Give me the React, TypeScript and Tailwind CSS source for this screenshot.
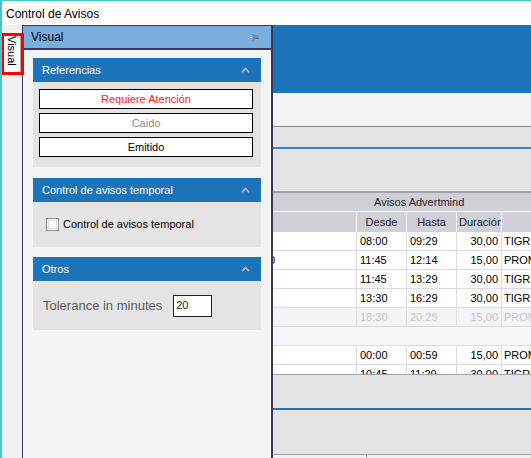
import React from "react";

function Chevron() {
  return (
    <svg width="9" height="6" viewBox="0 0 9 6" className="block">
      <path d="M1 5.2 L4.5 1.6 L8 5.2" fill="none" stroke="#a7b2c3" strokeWidth="1.8" />
    </svg>
  );
}

function Pin() {
  return (
    <svg width="9" height="7" viewBox="0 0 9 7" className="block">
      <rect x="0" y="3" width="2.5" height="1" fill="#ffffff" />
      <rect x="2.5" y="0" width="1" height="7" fill="#7d8591" />
      <rect x="3.5" y="1" width="5" height="4" fill="#838b97" />
      <rect x="3.5" y="4" width="5" height="1" fill="#5f6772" />
    </svg>
  );
}

function GroupHeader({ title }: { title: string }) {
  return (
    <div className="h-[24px] bg-[#1e74b8] flex items-center justify-between pl-[9px] pr-[11px] text-white text-[11px]">
      <span>{title}</span>
      <Chevron />
    </div>
  );
}

type Row = { c0?: string; a: string; b: string; d: string; e: string; faded?: boolean; blank?: boolean };

const rows: Row[] = [
  { a: "08:00", b: "09:29", d: "30,00", e: "TIGRE" },
  { c0: "0", a: "11:45", b: "12:14", d: "15,00", e: "PROMO" },
  { a: "11:45", b: "13:29", d: "30,00", e: "TIGRE" },
  { a: "13:30", b: "16:29", d: "30,00", e: "TIGRE" },
  { a: "18:30", b: "20:29", d: "15,00", e: "PROMO", faded: true },
  { a: "", b: "", d: "", e: "", blank: true },
  { a: "00:00", b: "00:59", d: "15,00", e: "PROMO" },
  { a: "10:45", b: "11:29", d: "30,00", e: "TIGRE" },
];

export default function App() {
  return (
    <div className="w-[531px] h-[458px] overflow-hidden bg-white border-t border-l-2 border-[#3fc8cc] font-['Liberation_Sans',Arial,sans-serif] text-black">
      {/* Title bar */}
      <div className="h-[24px] flex items-center pl-[4px] pt-[2px] text-[12px]">Control de Avisos</div>

      {/* Client area */}
      <div className="relative flex h-[433px]">
        {/* Left auto-hide strip */}
        <div className="w-[20px] bg-[#f0f0f0] flex flex-col">
          <div className="mt-[8px] h-[42px] w-[19px] bg-[#f7f7f7] border-r border-[#a9a9a9] flex justify-center pt-[3px]">
            <span className="[writing-mode:vertical-rl] text-[11px] leading-[13px]">Visual</span>
          </div>
        </div>

        {/* Flyout panel */}
        <div className="w-[251px] border-t border-l border-r-2 border-[#3a3a58] bg-[#f4f4f4] flex flex-col">
          <div className="h-[22px] bg-[#79aedd] flex items-center justify-between pl-[8px] pr-[12px] text-[12px]">
            <span>Visual</span>
            <Pin />
          </div>
          <div className="h-[2px] bg-[#3a3a58]" />

          <div className="mx-[10px] mt-[8px]">
            <GroupHeader title="Referencias" />
            <div className="h-[85px] bg-[#e4e4e4] pl-[6px] pr-[8px] pt-[7px] flex flex-col gap-[4px] text-[11px]">
              <div className="h-[20px] bg-white border border-black flex items-center justify-center text-[#ff1a1a]">Requiere Atención</div>
              <div className="h-[20px] bg-white border border-black flex items-center justify-center text-[#8c8c8c]">Caido</div>
              <div className="h-[20px] bg-white border border-black flex items-center justify-center text-black">Emitido</div>
            </div>
          </div>

          <div className="mx-[10px] mt-[11px]">
            <GroupHeader title="Control de avisos temporal" />
            <div className="h-[45px] bg-[#e4e4e4] pl-[13px] flex items-center gap-[4px] text-[11px]">
              <div className="w-[13px] h-[13px] border border-[#8f9097] bg-white p-[1px]">
                <div className="w-full h-full border border-[#dcdcdc]" />
              </div>
              <span>Control de avisos temporal</span>
            </div>
          </div>

          <div className="mx-[10px] mt-[10px]">
            <GroupHeader title="Otros" />
            <div className="h-[49px] bg-[#e4e4e4] pl-[10px] flex items-center gap-[11px]">
              <span className="text-[13px] text-[#5a5a5a]">Tolerance in minutes</span>
              <div className="w-[39px] h-[22px] bg-white border border-[#222] flex items-center pl-[2px] text-[11px] text-[#222]">20</div>
            </div>
          </div>
        </div>

        {/* Main area (behind) */}
        <div className="flex-1 flex flex-col overflow-hidden">
          <div className="h-[68px] bg-[#1d74b8]" />
          <div className="h-[33px] bg-[#f4f4f4] border-t border-[#e4f1fb]" />
          <div className="h-[22px] bg-[#e4e4e4] border-t border-[#7b8a8b]" />
          <div className="h-[44px] bg-[#e4e4e4] border-t-2 border-[#3a86c6]" />
          <div className="h-[20px] bg-[#cfcfd6] border-t-2 border-[#a2a2aa] pl-[101px] flex items-center text-[11px] text-[#222] whitespace-nowrap">
            Avisos Advertmind
          </div>
          <div className="h-[21px] border-t border-white bg-[#cfd0d8] grid grid-cols-[84px_50px_50px_45px_1fr] text-[11px] text-[#222]">
            <div className="border-r border-white" />
            <div className="border-r border-white flex items-center justify-center">Desde</div>
            <div className="border-r border-white flex items-center justify-center">Hasta</div>
            <div className="border-r border-white flex items-center pl-[2px] overflow-hidden whitespace-nowrap">Duración</div>
            <div />
          </div>
          <div className="h-[143px] overflow-hidden bg-white">
            {rows.map((r, i) =>
              r.blank ? (
                <div key={i} className="h-[19px] bg-[#f7f7f9] border-b border-[#dcdce2]" />
              ) : (
                <div
                  key={i}
                  className={
                    "h-[19px] border-b border-[#dcdce2] grid grid-cols-[84px_50px_50px_45px_1fr] text-[11px] " +
                    (r.faded ? "bg-[#f4f4f6] text-[#c6c6cc]" : "bg-white text-black")
                  }
                >
                  <div className="border-r border-[#dcdce2] flex items-center overflow-hidden">
                    {r.c0 ? <span className="ml-[-4px]">{r.c0}</span> : null}
                  </div>
                  <div className="border-r border-[#dcdce2] flex items-center pl-[3px]">{r.a}</div>
                  <div className="border-r border-[#dcdce2] flex items-center pl-[3px]">{r.b}</div>
                  <div className="border-r border-[#dcdce2] flex items-center justify-end pr-[3px]">{r.d}</div>
                  <div className="flex items-center pl-[2px] whitespace-nowrap overflow-hidden">{r.e}</div>
                </div>
              )
            )}
          </div>
          <div className="h-[34px] bg-[#e4e4e4] border-t border-[#a2a2aa]" />
          <div className="h-[46px] bg-[#e4e4e4] border-t-2 border-[#2273b8]" />
          <div className="h-[4px] border-t border-[#a2a2aa] bg-[#f0f0f0] flex">
            <div className="w-[94px] border-r border-[#a2a2aa]" />
          </div>
        </div>

        {/* Red highlight box over the tab */}
        <div className="absolute left-[-1px] top-[8px] w-[23px] h-[42px] border-[3px] border-[#ff0000] pointer-events-none" />
      </div>
    </div>
  );
}
